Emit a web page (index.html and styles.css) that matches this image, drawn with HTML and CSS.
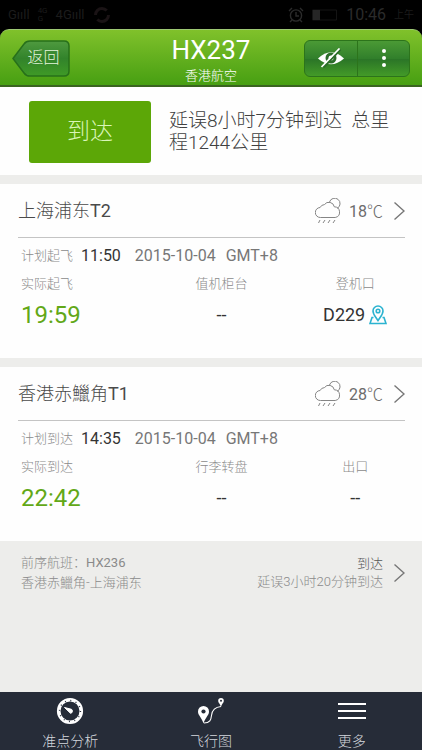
FILE: index.html
```html
<!DOCTYPE html>
<html lang="zh-CN">
<head>
<meta charset="utf-8">
<meta name="viewport" content="width=device-width, initial-scale=1">
<title>HX237 香港航空</title>
<link rel="stylesheet" href="styles.css">
</head>
<body>
<svg class="sprite" aria-hidden="true">
  <symbol id="weather" viewBox="0 0 26 26">
    <g fill="none" stroke="#858585" stroke-width="1">
      <path d="M5.5 19.5a5 5 0 0 1-.4-10 5 5 0 0 1 4.3-2.9 5.500 5.500 0 0 1 9.900 2.200 5.400 5.400 0 0 1 .9 10.700z"/>
      <path d="M14.500 4a5.400 5.400 0 1 1 7.800 6.300"/>
      <path d="M5 22l-1.500 3M10 22l-2 3M15 22l-2 3M20 22l-2 3"/>
    </g>
  </symbol>
  <symbol id="chevron" viewBox="0 0 12 20">
    <path d="M1.500 1.500l9.500 8.500-9.500 8.500" fill="none" stroke="#777" stroke-width="1.400"/>
  </symbol>
</svg>

<div class="status">
  <span class="status-text">Gııll</span>
  <span class="status-net">4G<br>G</span>
  <span class="status-text">4Gııll</span>
  <svg class="status-ring" viewBox="0 0 18 18"><circle cx="9" cy="9" r="6.500" fill="none" stroke="#1a1315" stroke-width="3" stroke-dasharray="15 5"/></svg>
  <svg class="status-alarm" viewBox="0 0 16 16"><g fill="none" stroke="#2b2b2b" stroke-width="1.400"><circle cx="8" cy="8.500" r="5.600"/><path d="M8 5v4h3M1 4l3-3M15 4l-3-3M4 13l-2 2M12 13l2 2"/></g></svg>
  <svg class="status-battery" viewBox="0 0 26 12"><path d="M.5 1h24v10H.5z" fill="none" stroke="#141414"/><path d="M1 1h7v10H1z" fill="#262626"/></svg>
  <span class="status-clock">10:46</span>
  <span class="status-half">上午</span>
</div>

<header class="header">
  <button class="back" type="button">
    <svg class="back-shape" viewBox="0 0 58 37" preserveAspectRatio="none" aria-hidden="true">
      <defs><linearGradient id="backfill" x1="0" y1="0" x2="0" y2="1"><stop offset="0" stop-color="#4f9a3f"/><stop offset=".5" stop-color="#32832b"/><stop offset="1" stop-color="#3f9a26"/></linearGradient></defs>
      <path d="M1 18.500L12 4Q14 1 18 1H52Q57 1 57 6V31Q57 36 52 36H18Q14 36 12 33Z" fill="url(#backfill)" stroke="#27701a" stroke-width="1.500"/>
    </svg>
    <span class="back-label">返回</span>
  </button>
  <div class="titles">
    <h1 class="title">HX237</h1>
    <p class="subtitle">香港航空</p>
  </div>
  <div class="actions">
    <button class="action" type="button" aria-label="取消关注">
      <svg class="eye" viewBox="0 0 28 20">
        <path d="M1 10.500Q14-2 27 10.500Q14 22 1 10.500Z" fill="#fff"/>
        <circle cx="14" cy="10" r="5.500" fill="#2c6d2a"/>
        <circle cx="14" cy="10" r="2.500" fill="#fff"/>
        <path d="M6.500 19.500L23.500 1.500" stroke="#2c6d2a" stroke-width="2"/>
        <path d="M4.500 19L22.500 .5" stroke="#fff" stroke-width="1.700"/>
      </svg>
    </button>
    <button class="action" type="button" aria-label="菜单">
      <svg class="dots" viewBox="0 0 4 18"><g fill="#fff"><circle cx="2" cy="2" r="2"/><circle cx="2" cy="9" r="2"/><circle cx="2" cy="16" r="2"/></g></svg>
    </button>
  </div>
</header>

<main class="main">
  <section class="summary">
    <strong class="state">到达</strong>
    <p class="summary-text">延误8小时7分钟到达&nbsp; 总里程1244公里</p>
  </section>

  <section class="card">
    <a class="place" href="#departure">
      <h2 class="place-name">上海浦东<span class="num">T2</span></h2>
      <svg class="weather"><use href="#weather"/></svg>
      <span class="temp"><span class="num">18</span><span class="unit">℃</span></span>
      <svg class="chevron"><use href="#chevron"/></svg>
    </a>
    <p class="plan"><span class="plan-label">计划起飞</span><b class="plan-time">11:50</b><span class="num">2015-10-04</span><span class="num plan-zone">GMT+8</span></p>
    <dl class="facts">
      <div class="fact"><dt>实际起飞</dt><dd class="actual">19:59</dd></div>
      <div class="fact"><dt>值机柜台</dt><dd>--</dd></div>
      <div class="fact"><dt>登机口</dt><dd>D229<svg class="pin" viewBox="0 0 18 20"><g fill="none" stroke="#2bb3d0" stroke-width="1.600"><path d="M9 15.500C6.500 11.500 4 9.500 4 6a5 5 0 0 1 10 0C14 9.500 11.500 11.500 9 15.500Z"/><circle cx="9" cy="6" r="1.800"/><path d="M4.500 12.500H3L1 18.500H17L15 12.500H13.500"/></g></svg></dd></div>
    </dl>
  </section>

  <section class="card">
    <a class="place" href="#arrival">
      <h2 class="place-name">香港赤鱲角<span class="num">T1</span></h2>
      <svg class="weather"><use href="#weather"/></svg>
      <span class="temp"><span class="num">28</span><span class="unit">℃</span></span>
      <svg class="chevron"><use href="#chevron"/></svg>
    </a>
    <p class="plan"><span class="plan-label">计划到达</span><b class="plan-time">14:35</b><span class="num">2015-10-04</span><span class="num plan-zone">GMT+8</span></p>
    <dl class="facts">
      <div class="fact"><dt>实际到达</dt><dd class="actual">22:42</dd></div>
      <div class="fact"><dt>行李转盘</dt><dd>--</dd></div>
      <div class="fact"><dt>出口</dt><dd>--</dd></div>
    </dl>
  </section>

  <a class="previous" href="#previous">
    <span class="previous-route">前序航班：<span class="num">HX236</span><br>香港赤鱲角-上海浦东</span>
    <span class="previous-state"><span class="previous-done">到达</span><br>延误3小时20分钟到达</span>
    <svg class="chevron"><use href="#chevron"/></svg>
  </a>
</main>

<nav class="tabs">
  <a class="tab" href="#analysis">
    <svg class="tab-icon" viewBox="0 0 28 28">
      <circle cx="14" cy="14" r="11.300" fill="none" stroke="#fff" stroke-width="3.600"/>
      <circle cx="14" cy="14" r="10.500" fill="none" stroke="#262c38" stroke-width="1.300" stroke-dasharray="1 4.498"/>
      <path d="M8.500 10.500L15.500 12.300A2.200 2.200 0 0 1 14.500 16.300Z" fill="#fff" stroke="#fff"/>
    </svg>
    <span>准点分析</span>
  </a>
  <a class="tab" href="#map">
    <svg class="tab-icon" viewBox="0 0 28 28">
      <path d="M6.500 26.500C4.500 20 1 18.500 1 14.500a5.500 5.500 0 0 1 11 0C12 18.500 8.500 20 6.500 26.500Z" fill="#fff"/>
      <circle cx="6.500" cy="14.500" r="2.100" fill="#262c38"/>
      <path d="M24 10C23 6.500 21.200 6 21.200 3.800a2.800 2.800 0 0 1 5.600 0C26.800 6 25 6.500 24 10Z" fill="#fff"/>
      <circle cx="24" cy="3.800" r="1" fill="#262c38"/>
      <path d="M7 26C13 26 14 23 14.500 18.500S18 10 24 9.500" fill="none" stroke="#fff" stroke-width="1.100"/>
    </svg>
    <span>飞行图</span>
  </a>
  <a class="tab" href="#more">
    <svg class="tab-icon" viewBox="0 0 28 28"><path d="M0 7h28M0 14h28M0 21h28" stroke="#fff" stroke-width="2"/></svg>
    <span>更多</span>
  </a>
</nav>
</body>
</html>
```

FILE: styles.css
```css
* {
  box-sizing: border-box;
}

body,
h1,
h2,
p,
dl,
dd {
  margin: 0;
}

body {
  display: flex;
  flex-direction: column;
  min-height: 100vh;
  background: #000;
  color: #4a4a4a;
  font-family: Roboto, "Noto Sans CJK SC", sans-serif;
  font-size: 13px;
  font-weight: 300;
  line-height: 20px;
}

a {
  color: inherit;
  text-decoration: none;
}

button {
  padding: 0;
  border: 0;
  background: none;
  font: inherit;
}

svg {
  display: block;
  flex: none;
}

.num {
  font-weight: 400;
}

.sprite {
  position: absolute;
  width: 0;
  height: 0;
}

.status {
  display: flex;
  align-items: center;
  gap: 8px;
  height: 29px;
  padding: 0 8px;
  color: #1c1c1c;
  font-weight: 400;
}

.status-net {
  font-size: 8px;
  line-height: 8px;
}

.status-ring {
  width: 18px;
  height: 18px;
}

.status-alarm {
  width: 16px;
  height: 16px;
  margin-left: auto;
}

.status-battery {
  width: 26px;
  height: 12px;
}

.status-clock {
  color: #2b2b2b;
  font-size: 16px;
}

.status-half {
  font-size: 10px;
}

.header {
  display: grid;
  grid-template-columns: 1fr auto 1fr;
  align-items: center;
  height: 58px;
  padding: 0 12px;
  border-top: 1px solid #9dc873;
  border-bottom: 2px solid #3a6420;
  border-radius: 9px 9px 0 0;
  background: linear-gradient(#80c12b, #479f12);
  color: #fff;
}

.back {
  position: relative;
  width: 58px;
  height: 37px;
  color: #e4f5dc;
  font-size: 16px;
}

.back-shape {
  position: absolute;
  inset: 0;
  width: 100%;
  height: 100%;
}

.back-label {
  position: relative;
  padding-left: 5px;
}

.titles {
  padding-top: 4px;
  text-align: center;
}

.title {
  font-size: 26px;
  font-weight: 400;
  line-height: 32px;
}

.subtitle {
  line-height: 20px;
}

.actions {
  display: flex;
  justify-self: end;
  border: 1px solid #2c741b;
  border-radius: 6px;
  background: linear-gradient(#4b9a35, #317f2b 50%, #2a7427 51%, #439a28);
}

.action {
  display: grid;
  place-items: center;
  width: 52px;
  height: 35px;
}

.action + .action {
  border-left: 1px solid #2c741b;
}

.eye {
  width: 28px;
  height: 20px;
}

.dots {
  width: 4px;
  height: 18px;
}

.main {
  flex: 1;
  background: #ededeb;
}

.summary {
  display: flex;
  align-items: center;
  gap: 18px;
  padding: 14px 16px 12px 29px;
  background: #fefefe;
}

.state {
  flex: none;
  width: 122px;
  border-radius: 3px;
  background: #5ca707;
  color: #d9f5b8;
  font-size: 23px;
  font-weight: 300;
  line-height: 62px;
  text-align: center;
}

.summary-text {
  color: #404040;
  font-size: 19px;
  line-height: 22px;
}

.card {
  margin-top: 9px;
  padding-bottom: 22px;
  background: #fefefe;
}

.place {
  display: flex;
  align-items: center;
  height: 54px;
  margin: 0 17px 0 18px;
  border-bottom: 1px solid #c4c4c4;
}

.place-name {
  flex: 1;
  font-size: 18px;
  font-weight: 300;
}

.weather {
  width: 26px;
  height: 26px;
}

.temp {
  margin: 0 10px 0 8px;
  color: #6c6c6c;
  font-size: 16px;
}

.unit {
  font-family: "Noto Sans CJK SC", sans-serif;
}

.chevron {
  width: 12px;
  height: 20px;
}

.plan {
  display: flex;
  align-items: center;
  height: 36px;
  padding-left: 21px;
  color: #777;
  font-size: 16px;
}

.plan-label {
  color: #8a8a8a;
  font-size: 13px;
}

.plan-time {
  margin: 0 14px 0 8px;
  color: #333;
  font-weight: 400;
}

.plan-zone {
  margin-left: 10px;
}

.facts {
  display: grid;
  grid-template-columns: repeat(3, 1fr);
  padding-left: 21px;
  text-align: center;
}

.fact:first-child {
  text-align: left;
}

.fact dt {
  color: #8a8a8a;
}

.fact dd {
  display: flex;
  align-items: center;
  justify-content: center;
  gap: 4px;
  height: 42px;
  color: #333;
  font-size: 18px;
  font-weight: 400;
}

.fact .actual {
  justify-content: flex-start;
  color: #62a817;
  font-size: 24px;
}

.pin {
  width: 18px;
  height: 20px;
}

.previous {
  display: flex;
  align-items: center;
  gap: 10px;
  padding: 12px 17px 10px 21px;
  color: #8a8a8a;
}

.previous-route {
  flex: 1;
}

.previous-state {
  line-height: 18px;
  text-align: right;
}

.previous-done {
  color: #555;
}

.tabs {
  display: grid;
  grid-template-columns: repeat(3, 1fr);
  height: 58px;
  padding-top: 5px;
  background: #262c38;
  color: #d4d7dd;
  font-size: 14px;
}

.tab {
  display: flex;
  flex-direction: column;
  align-items: center;
  gap: 6px;
}

.tab-icon {
  width: 28px;
  height: 28px;
}
```
